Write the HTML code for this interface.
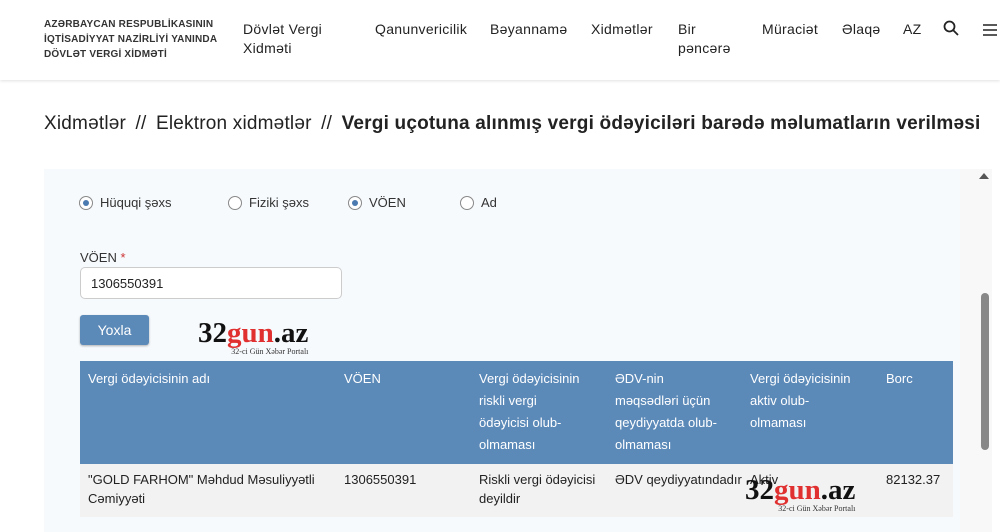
<!DOCTYPE html>
<html><head><meta charset="utf-8"><style>
*{margin:0;padding:0;box-sizing:border-box}
body{width:1000px;height:532px;overflow:hidden;background:#fff;font-family:"Liberation Sans",sans-serif;position:relative;color:#222}
.hdr{position:absolute;left:0;top:0;width:1000px;height:80px;background:#fff;box-shadow:0 1px 3px rgba(0,0,0,.12)}
.logo{position:absolute;left:44px;top:17px;font-size:10px;font-weight:bold;line-height:15px;color:#333;letter-spacing:.2px}
.nav{position:absolute;top:20px;font-size:14px;color:#222;line-height:19px;letter-spacing:.3px}
.bc{position:absolute;left:44px;top:113px;font-size:19px;color:#222;white-space:nowrap;letter-spacing:.2px}
.bc b{font-weight:bold}
.panel{position:absolute;left:44px;top:169px;width:916px;height:363px;background:#f7fafd}
.sb{position:absolute;left:960px;top:169px;width:32px;height:363px;background:#f8f8f8}
.thumb{position:absolute;left:981px;top:293px;width:8px;height:157px;background:#888;border-radius:4px}
.radio{position:absolute;top:196px;width:14px;height:14px;border:1px solid #888;border-radius:50%;background:#fff}
.radio.on::after{content:"";position:absolute;left:3px;top:3px;width:6px;height:6px;border-radius:50%;background:#4a7ab0}
.rl{position:absolute;top:195px;font-size:13px;color:#333}
.inp{position:absolute;left:80px;top:267px;width:262px;height:32px;border:1px solid #ccc;border-radius:5px;background:#fff;font-size:13px;padding:8px 10px;color:#222}
.btn{position:absolute;left:80px;top:315px;width:69px;height:30px;background:#5b89b8;border-radius:3px;color:#fff;font-size:14px;text-align:center;line-height:30px;box-shadow:0 1px 2px rgba(0,0,0,.3)}
.wm{position:absolute;font-family:"Liberation Serif",serif;font-weight:bold;font-size:29px;line-height:27px;color:#111}
.wm span{color:#e03030}
.wm small{display:block;font-size:8px;font-weight:normal;line-height:10px;text-align:right;color:#333}
.th{position:absolute;left:80px;top:361px;width:873px;height:103px;background:#5b89b8}
.tr{position:absolute;left:80px;top:464px;width:873px;height:53px;background:#f2f2f2}
.c{position:absolute;font-size:13px;line-height:22px}
.h{color:#fff;top:368px}
.d{color:#222;top:470px;line-height:19px}
</style></head><body>
<div class="hdr">
<div class="logo">AZƏRBAYCAN RESPUBLİKASININ<br>İQTİSADİYYAT NAZİRLİYİ YANINDA<br>DÖVLƏT VERGİ XİDMƏTİ</div>
<div class="nav" style="left:243px">Dövlət Vergi<br>Xidməti</div>
<div class="nav" style="left:375px">Qanunvericilik</div>
<div class="nav" style="left:490px">Bəyannamə</div>
<div class="nav" style="left:591px">Xidmətlər</div>
<div class="nav" style="left:678px">Bir<br>pəncərə</div>
<div class="nav" style="left:762px">Müraciət</div>
<div class="nav" style="left:842px">Əlaqə</div>
<div class="nav" style="left:903px">AZ</div>
<svg style="position:absolute;left:943px;top:20px" width="16" height="16" viewBox="0 0 16 16"><circle cx="6.5" cy="6.5" r="5" fill="none" stroke="#222" stroke-width="1.8"/><path d="M10 10l5 5" stroke="#222" stroke-width="1.8"/></svg>
<svg style="position:absolute;left:982px;top:23px" width="16" height="14" viewBox="0 0 16 14"><path d="M1 2h14M1 7h14M1 12h14" stroke="#222" stroke-width="1.6"/></svg>
</div>
<div class="bc">Xidmətlər <span style="margin:0 4px">//</span> Elektron xidmətlər <span style="margin:0 4px">//</span> <b>Vergi uçotuna alınmış vergi ödəyiciləri barədə məlumatların verilməsi</b></div>
<div class="panel"></div>
<div class="sb"></div>
<div style="position:absolute;left:979px;top:173px;width:0;height:0;border-left:5px solid transparent;border-right:5px solid transparent;border-bottom:6px solid #555"></div>
<div class="thumb"></div>
<div class="radio on" style="left:79px"></div><div class="rl" style="left:100px">Hüquqi şəxs</div>
<div class="radio" style="left:228px"></div><div class="rl" style="left:249px">Fiziki şəxs</div>
<div class="radio on" style="left:348px"></div><div class="rl" style="left:369px">VÖEN</div>
<div class="radio" style="left:460px"></div><div class="rl" style="left:481px">Ad</div>
<div class="rl" style="left:80px;top:250px">VÖEN <span style="color:#c33">*</span></div>
<div class="inp">1306550391</div>
<div class="btn">Yoxla</div>
<div class="wm" style="left:198px;top:320px">32<span>gun</span>.az<small>32-ci Gün Xəbər Portalı</small></div>
<div class="th"></div>
<div class="tr"></div>
<div class="c h" style="left:88px">Vergi ödəyicisinin adı</div>
<div class="c h" style="left:344px">VÖEN</div>
<div class="c h" style="left:479px">Vergi ödəyicisinin<br>riskli vergi<br>ödəyicisi olub-<br>olmaması</div>
<div class="c h" style="left:615px">ƏDV-nin<br>məqsədləri üçün<br>qeydiyyatda olub-<br>olmaması</div>
<div class="c h" style="left:750px">Vergi ödəyicisinin<br>aktiv olub-<br>olmaması</div>
<div class="c h" style="left:886px">Borc</div>
<div class="c d" style="left:88px">"GOLD FARHOM" Məhdud Məsuliyyətli<br>Cəmiyyəti</div>
<div class="c d" style="left:344px">1306550391</div>
<div class="c d" style="left:479px">Riskli vergi ödəyicisi<br>deyildir</div>
<div class="c d" style="left:615px">ƏDV qeydiyyatındadır</div>
<div class="c d" style="left:750px">Aktiv</div>
<div class="c d" style="left:886px">82132.37</div>
<div class="wm" style="left:745px;top:477px">32<span>gun</span>.az<small>32-ci Gün Xəbər Portalı</small></div>
</body></html>
